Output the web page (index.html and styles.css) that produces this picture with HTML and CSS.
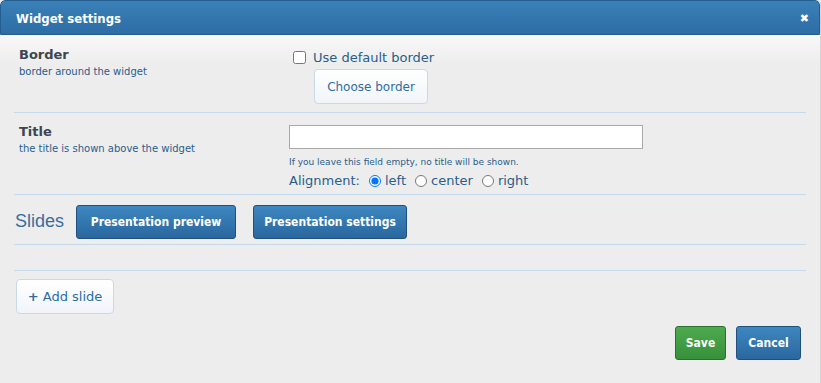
FILE: index.html
```html
<!DOCTYPE html>
<html lang="en">
<head>
    <meta charset="UTF-8">
    <title>Widget settings</title>
    <link rel="stylesheet" href="styles.css">
</head>
<body>
    <div class="dialog">
        <div class="dialog-header">
            <span class="dialog-title">Widget settings</span>
            <span class="dialog-close">&#10006;</span>
        </div>

        <div class="dialog-body">
            <div class="row row-border">
                <div class="row-label">
                    <div class="label-name">Border</div>
                    <div class="label-hint">border around the widget</div>
                </div>
                <div class="row-field">
                    <label class="check"><input type="checkbox"> Use default border</label>
                    <button class="btn-light choose">Choose border</button>
                </div>
            </div>

            <div class="row row-title">
                <div class="row-label">
                    <div class="label-name">Title</div>
                    <div class="label-hint">the title is shown above the widget</div>
                </div>
                <div class="row-field">
                    <input type="text" class="text-input">
                    <div class="help">If you leave this field empty, no title will be shown.</div>
                    <div class="align">
                        Alignment:
                        <label><input type="radio" name="align" checked>left</label>
                        <label><input type="radio" name="align">center</label>
                        <label><input type="radio" name="align">right</label>
                    </div>
                </div>
            </div>

            <div class="slides">
                <span class="slides-title">Slides</span>
                <button class="btn-blue preview">Presentation preview</button>
                <button class="btn-blue settings">Presentation settings</button>
            </div>

            <div class="slide-list"></div>

            <div class="add-row">
                <button class="btn-light add"><span class="plus">+</span> Add slide</button>
            </div>

            <div class="actions">
                <button class="btn-green">Save</button>
                <button class="btn-blue">Cancel</button>
            </div>
        </div>
    </div>
</body>
</html>
```

FILE: styles.css
```css
body {
    margin: 0;
    font-family: "DejaVu Sans", Verdana, sans-serif;
    background: #ededed;
}

.dialog {
    width: 821px;
    height: 383px;
    box-sizing: border-box;
    border-right: 1px solid #d4d4d4;
    border-radius: 5px 5px 0 5px;
    background: #ededed;
    overflow: hidden;
}

.dialog-header {
    height: 35px;
    box-sizing: border-box;
    display: flex;
    align-items: center;
    justify-content: space-between;
    padding: 1px 10px 0 15px;
    background: linear-gradient(#3a80b8, #2c6da4);
    border: 1px solid #245d8e;
    border-radius: 5px 5px 0 0;
    color: #fff;
}

.dialog-title {
    font-family: "DejaVu Sans Condensed", "DejaVu Sans", sans-serif;
    font-weight: bold;
    font-size: 13px;
}

.dialog-close {
    font-size: 11px;
    font-weight: bold;
}

.dialog-body {
    padding: 0 14px;
    background: linear-gradient(#f8f8f8, #ededed 30px);
}

.row {
    display: flex;
    border-bottom: 1px solid #c6daed;
}

.row-label {
    width: 270px;
    padding: 12px 0 0 5px;
}

.row-title .row-label {
    padding-top: 11px;
}

.label-name {
    font-weight: bold;
    font-size: 13px;
    color: #3c4650;
}

.label-hint {
    font-size: 10px;
    color: #2a5d8c;
    margin-top: 4px;
}

.row-field {
    padding-top: 15px;
    padding-bottom: 8px;
}

.row-title .row-field {
    padding-top: 12px;
    padding-bottom: 6px;
}

.check {
    display: flex;
    align-items: center;
    font-size: 13px;
    color: #2a5d8c;
    margin-left: 4px;
}

.check input {
    margin: 0 7px 0 0;
    width: 13px;
    height: 13px;
}

.btn-light {
    font-family: "DejaVu Sans", sans-serif;
    font-size: 12px;
    color: #2e6da4;
    background: linear-gradient(#ffffff, #f0f5fa);
    border: 1px solid #cbd9e7;
    border-radius: 4px;
    height: 35px;
    padding: 0 10px;
}

.choose {
    display: block;
    margin: 4px 0 0 25px;
    width: 114px;
    padding: 0;
}

.text-input {
    display: block;
    width: 354px;
    height: 24px;
    box-sizing: border-box;
    border: 1px solid #a9a9a9;
    margin: 0;
}

.help {
    font-size: 9px;
    color: #2a5d8c;
    margin-top: 8px;
}

.align {
    display: flex;
    align-items: center;
    font-size: 13px;
    color: #2a5d8c;
    margin-top: 6px;
    gap: 6px;
}

.align label {
    display: flex;
    align-items: center;
    margin-left: 3px;
}

.align input {
    margin: 0 4px 0 0;
    width: 12px;
    height: 12px;
}

.slides {
    display: flex;
    align-items: flex-start;
    height: 50px;
    box-sizing: border-box;
    padding: 10px 0 0 1px;
    border-bottom: 1px solid #c6daed;
    gap: 17px;
}

.slides-title {
    font-family: "Liberation Sans", Arial, sans-serif;
    font-size: 18px;
    color: #3a6d9d;
    margin: 6px -5px 0 0;
}

.btn-blue {
    font-family: "DejaVu Sans Condensed", "DejaVu Sans", sans-serif;
    font-weight: bold;
    font-size: 12px;
    color: #fff;
    background: linear-gradient(#3e87c0, #2a679e);
    border: 1px solid #1f507e;
    border-radius: 3px;
    height: 34px;
    padding: 0 10px;
}

.preview {
    width: 160px;
}

.settings {
    width: 154px;
}

.slide-list {
    height: 25px;
    border-bottom: 1px solid #c6daed;
}

.add-row {
    padding: 8px 0 0 2px;
}

.add {
    width: 98px;
    height: 35px;
    font-size: 13px;
}

.plus {
    font-weight: bold;
}

.actions {
    display: flex;
    justify-content: flex-end;
    gap: 10px;
    padding: 12px 5px 0 0;
}

.actions button {
    height: 34px;
}

.btn-green {
    font-family: "DejaVu Sans Condensed", "DejaVu Sans", sans-serif;
    font-weight: bold;
    font-size: 12px;
    color: #fff;
    background: linear-gradient(#4eaa4e, #36913a);
    border: 1px solid #2a6f2c;
    border-radius: 3px;
    width: 51px;
    padding: 0;
}

.actions .btn-blue {
    width: 65px;
    padding: 0;
}
```
